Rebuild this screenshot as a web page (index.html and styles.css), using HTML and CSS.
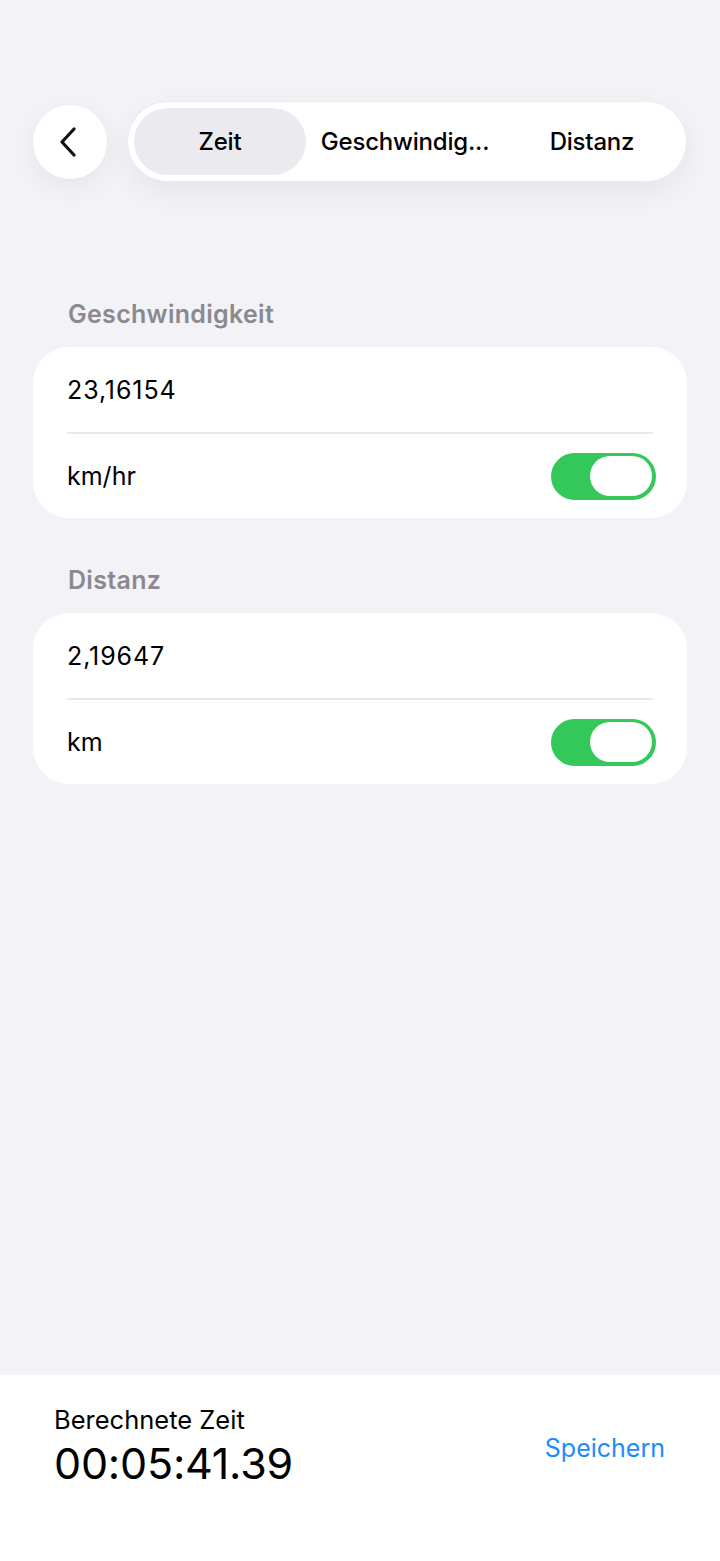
FILE: index.html
```html
<!DOCTYPE html>
<html lang="de">
<head>
<meta charset="utf-8">
<link rel="stylesheet" href="styles.css">
</head>
<body>
<div class="screen">
  <header class="topbar">
    <button class="back" aria-label="Zurück">
      <svg width="18" height="30" viewBox="0 0 18 30"><path d="M15 2 L3 15 L15 28" fill="none" stroke="#111" stroke-width="3.2" stroke-linecap="round" stroke-linejoin="round"/></svg>
    </button>
    <nav class="segment">
      <div class="tab tab-1 active">Zeit</div>
      <div class="tab tab-2">Geschwindig...</div>
      <div class="tab tab-3">Distanz</div>
    </nav>
  </header>

  <main class="content">
    <section class="group first">
      <h2 class="group-title">Geschwindigkeit</h2>
      <div class="card">
        <div class="row"><span class="num">23,16154</span></div>
        <div class="divider"></div>
        <div class="row row-last">
          <span>km/hr</span>
          <span class="toggle"><span class="knob"></span></span>
        </div>
      </div>
    </section>
    <section class="group">
      <h2 class="group-title">Distanz</h2>
      <div class="card">
        <div class="row"><span class="num">2,19647</span></div>
        <div class="divider"></div>
        <div class="row row-last">
          <span>km</span>
          <span class="toggle"><span class="knob"></span></span>
        </div>
      </div>
    </section>
  </main>

  <footer class="bottombar">
    <div class="result">
      <div class="result-label">Berechnete Zeit</div>
      <div class="result-value">00:05:41.39</div>
    </div>
    <div class="save">Speichern</div>
  </footer>
</div>
</body>
</html>
```

FILE: styles.css
```css
* { box-sizing: border-box; }
html, body {
  margin: 0;
  padding: 0;
  background: #f2f2f7;
  font-family: Inter, "Noto Sans", "Liberation Sans", sans-serif;
  color: #000;
}
.screen {
  height: 1561px;
  display: flex;
  flex-direction: column;
}
.topbar {
  display: flex;
  align-items: center;
  gap: 20px;
  padding: 101px 33px 0 33px;
}
.back {
  width: 74px;
  height: 74px;
  border-radius: 50%;
  border: none;
  background: #fff;
  display: flex;
  align-items: center;
  justify-content: center;
  padding: 0 4px 0 0;
  box-shadow: 0 8px 28px rgba(0,0,0,0.06);
}
.segment {
  flex: 1;
  height: 81px;
  border-radius: 41px;
  background: #fff;
  border: 1px solid #ececf0;
  padding: 6px;
  display: flex;
  align-items: stretch;
  box-shadow: 0 10px 30px rgba(0,0,0,0.06);
}
.tab {
  display: flex;
  align-items: center;
  justify-content: center;
  font-size: 24px;
  font-weight: 500;
  letter-spacing: -0.2px;
  border-radius: 34px;
}
.tab-1 { width: 172px; }
.tab-2 { width: 198px; }
.tab-3 { flex: 1; }
.tab.active { background: #ebebef; }

.content {
  flex: 1;
  padding: 0 33px;
}
.group { margin-top: 48px; }
.group.first { margin-top: 118px; }
.group-title {
  margin: 0 0 18px 35px;
  font-size: 25px;
  line-height: 29px;
  font-weight: 600;
  color: #8a8a8e;
  letter-spacing: 0.3px;
}
.card {
  background: #fff;
  border-radius: 36px;
  padding: 0 34px;
}
.row {
  height: 85px;
  display: flex;
  align-items: center;
  justify-content: space-between;
  font-size: 25px;
}
.row-last { height: 84px; }
.num { letter-spacing: 0.9px; }
.divider {
  height: 2px;
  background: #e8e8ec;
}
.toggle {
  width: 105px;
  height: 47px;
  border-radius: 24px;
  background: #34c759;
  margin-right: -3px;
  display: flex;
  align-items: center;
  justify-content: flex-end;
  padding-right: 4px;
}
.knob {
  width: 62px;
  height: 40px;
  border-radius: 20px;
  background: #fff;
}

.bottombar {
  height: 186px;
  background: #fff;
  display: flex;
  align-items: center;
  justify-content: space-between;
  padding: 0 55px 41px 54px;
}
.result-label {
  font-size: 25.5px;
  line-height: 30px;
}
.result-value {
  font-size: 43px;
  line-height: 56px;
  letter-spacing: -0.2px;
}
.save {
  color: #1a8cff;
  font-size: 25px;
}
```
